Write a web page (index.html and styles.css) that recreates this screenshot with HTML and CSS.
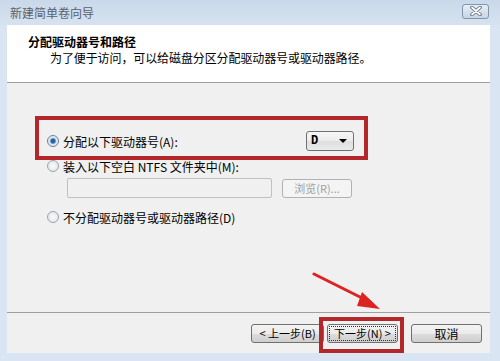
FILE: index.html
```html
<!DOCTYPE html>
<html>
	<head>
		<meta charset="utf-8">
		<title>新建简单卷向导</title>
	<link rel="stylesheet" href="styles.css">
	</head>
	<body>
	<div class="win">
		<div class="titlebar">
			<span class="title">新建简单卷向导</span>
			<span class="close">
				<svg width="14" height="10" viewBox="0 0 14 10">
					<path d="M3 1.5 L11 8.5 M11 1.5 L3 8.5" stroke="#5b6b80" stroke-width="3.6" stroke-linecap="round"/>
					<path d="M3 1.5 L11 8.5 M11 1.5 L3 8.5" stroke="#fff" stroke-width="1.8" stroke-linecap="round"/>
				</svg>
			</span>
		</div>
		<div class="client">
			<div class="head">
				<div class="h1">分配驱动器号和路径</div>
				<div class="h2">为了便于访问，可以给磁盘分区分配驱动器号或驱动器路径。</div>
			</div>
			<div class="main">
				<div class="mark">
					<div class="opt first">
						<span class="radio on"></span>
						<span class="lab">分配以下驱动器号(A):</span>
						<span class="combo"><span class="val">D</span><span class="caret"></span></span>
					</div>
				</div>
				<div class="opt second">
					<span class="radio"></span>
					<span class="lab">装入以下空白 NTFS 文件夹中(M):</span>
				</div>
				<div class="pathrow">
					<span class="field"></span>
					<span class="btn dis">浏览(R)...</span>
				</div>
				<div class="opt third">
					<span class="radio"></span>
					<span class="lab">不分配驱动器号或驱动器路径(D)</span>
				</div>
			</div>
			<div class="foot">
				<span class="btn back">&lt; 上一步(B)</span>
				<span class="btn next">下一步(N) &gt;</span>
				<span class="btn cancel">取消</span>
			</div>
		</div>
		<!-- 标注 -->
		<div class="box-next"></div>
		<svg class="arrow" width="90" height="50" viewBox="0 0 90 50">
			<path d="M2 2 L58 30" stroke="#d22" stroke-width="3" stroke-linecap="round"/>
			<path d="M50 20 L68 37 L45 34 Z" fill="#d22"/>
		</svg>
	</div>
	</body>
</html>
```
FILE: styles.css
```css
*{
	box-sizing: border-box;
}
body{
	margin: 0;
	font-family: "Noto Sans CJK SC", "Liberation Sans", sans-serif;
	font-size: 12px;
	color: #000;
}
.win{
	position: relative;
	width: 500px;
	height: 361px;
	background: #d9e5f2;
	display: flex;
	flex-direction: column;
	overflow: hidden;
}
.titlebar{
	height: 25px;
	display: flex;
	align-items: center;
	justify-content: space-between;
	padding: 0 11px 0 10px;
	background: linear-gradient(#c9d8ea, #d6e2ef);
}
.title{
	color: #59626d;
	font-size: 12px;
}
.close{
	width: 27px;
	height: 15px;
	margin-top: -3px;
	border: 1px solid #8395ad;
	border-radius: 3px;
	background: linear-gradient(#e6edf5, #c8d5e4);
	display: flex;
	align-items: center;
	justify-content: center;
}
.client{
	margin: 0 10px 8px 7px;
	flex: 1;
	background: #f0f0f0;
	display: flex;
	flex-direction: column;
}
.head{
	height: 58px;
	background: #fff;
	border-bottom: 1px solid #a0a0a0;
	padding: 9px 0 0 21px;
}
.h1{
	font-weight: bold;
	line-height: 16px;
}
.h2{
	padding-left: 22px;
	line-height: 16px;
	letter-spacing: -0.1px;
}
.main{
	height: 230px;
	border-bottom: 1px solid #a0a0a0;
	padding-top: 33px;
}
.mark{
	margin-left: 28px;
	width: 333px;
	height: 44px;
	border: 4px solid #b3262a;
	padding: 11px 10px 0 8px;
}
.opt{
	display: flex;
	align-items: center;
	gap: 4px;
}
.first{
	height: 20px;
}
.second,.third{
	height: 12px;
	margin-left: 40px;
}
.third{
	margin-top: 13px;
}
.radio{
	width: 12px;
	height: 12px;
	border-radius: 50%;
	border: 1px solid #9aa4ae;
	background: radial-gradient(#fafafa, #dde1e5);
	flex: none;
}
.radio.on{
	border-color: #6d7f92;
	background: radial-gradient(circle, #1d4f8c 0, #2f6db0 2px, #d9e6f2 3.5px, #f4f4f4 100%);
}
.first .lab{
	flex: 1;
}
.combo{
	width: 48px;
	height: 20px;
	border: 1px solid #707070;
	border-radius: 3px;
	background: linear-gradient(#f6f6f6 0, #ececec 50%, #dedede 51%, #ebebeb 100%);
	display: flex;
	align-items: center;
	justify-content: space-between;
	padding: 0 6px 0 4px;
}
.val{
	font-family: "Liberation Mono", monospace;
	font-weight: bold;
	font-size: 12px;
}
.caret{
	border-left: 4px solid transparent;
	border-right: 4px solid transparent;
	border-top: 4px solid #000;
}
.pathrow{
	display: flex;
	margin: 6px 0 0 60px;
	gap: 10px;
}
.field{
	width: 205px;
	height: 20px;
	border: 1px solid #c0c0c0;
	border-radius: 2px;
	background: #f0f0f0;
}
.btn{
	height: 19px;
	border: 1px solid #707070;
	border-radius: 3px;
	background: linear-gradient(#f3f3f3 0, #ebebeb 50%, #dddddd 51%, #cfcfcf 100%);
	display: flex;
	align-items: center;
	justify-content: center;
	font-size: 11px;
	line-height: 1;
	white-space: nowrap;
}
.btn.dis{
	width: 70px;
	margin-top: 1px;
	border-color: #adb2b5;
	background: #f4f4f4;
	color: #a0a0a0;
}
.foot{
	flex: 1;
	display: flex;
	align-items: flex-start;
	justify-content: flex-end;
	padding: 11px 8px 0 0;
}
.back{
	width: 73px;
}
.next{
	width: 71px;
	margin-left: 3px;
	outline: 1px dotted #333;
	outline-offset: -3px;
}
.cancel{
	width: 71px;
	margin-left: 13px;
	font-size: 12px;
}
.box-next{
	position: absolute;
	left: 319px;
	top: 317px;
	width: 85px;
	height: 36px;
	border: 4px solid #b3262a;
}
.arrow{
	position: absolute;
	left: 312px;
	top: 272px;
}
```
